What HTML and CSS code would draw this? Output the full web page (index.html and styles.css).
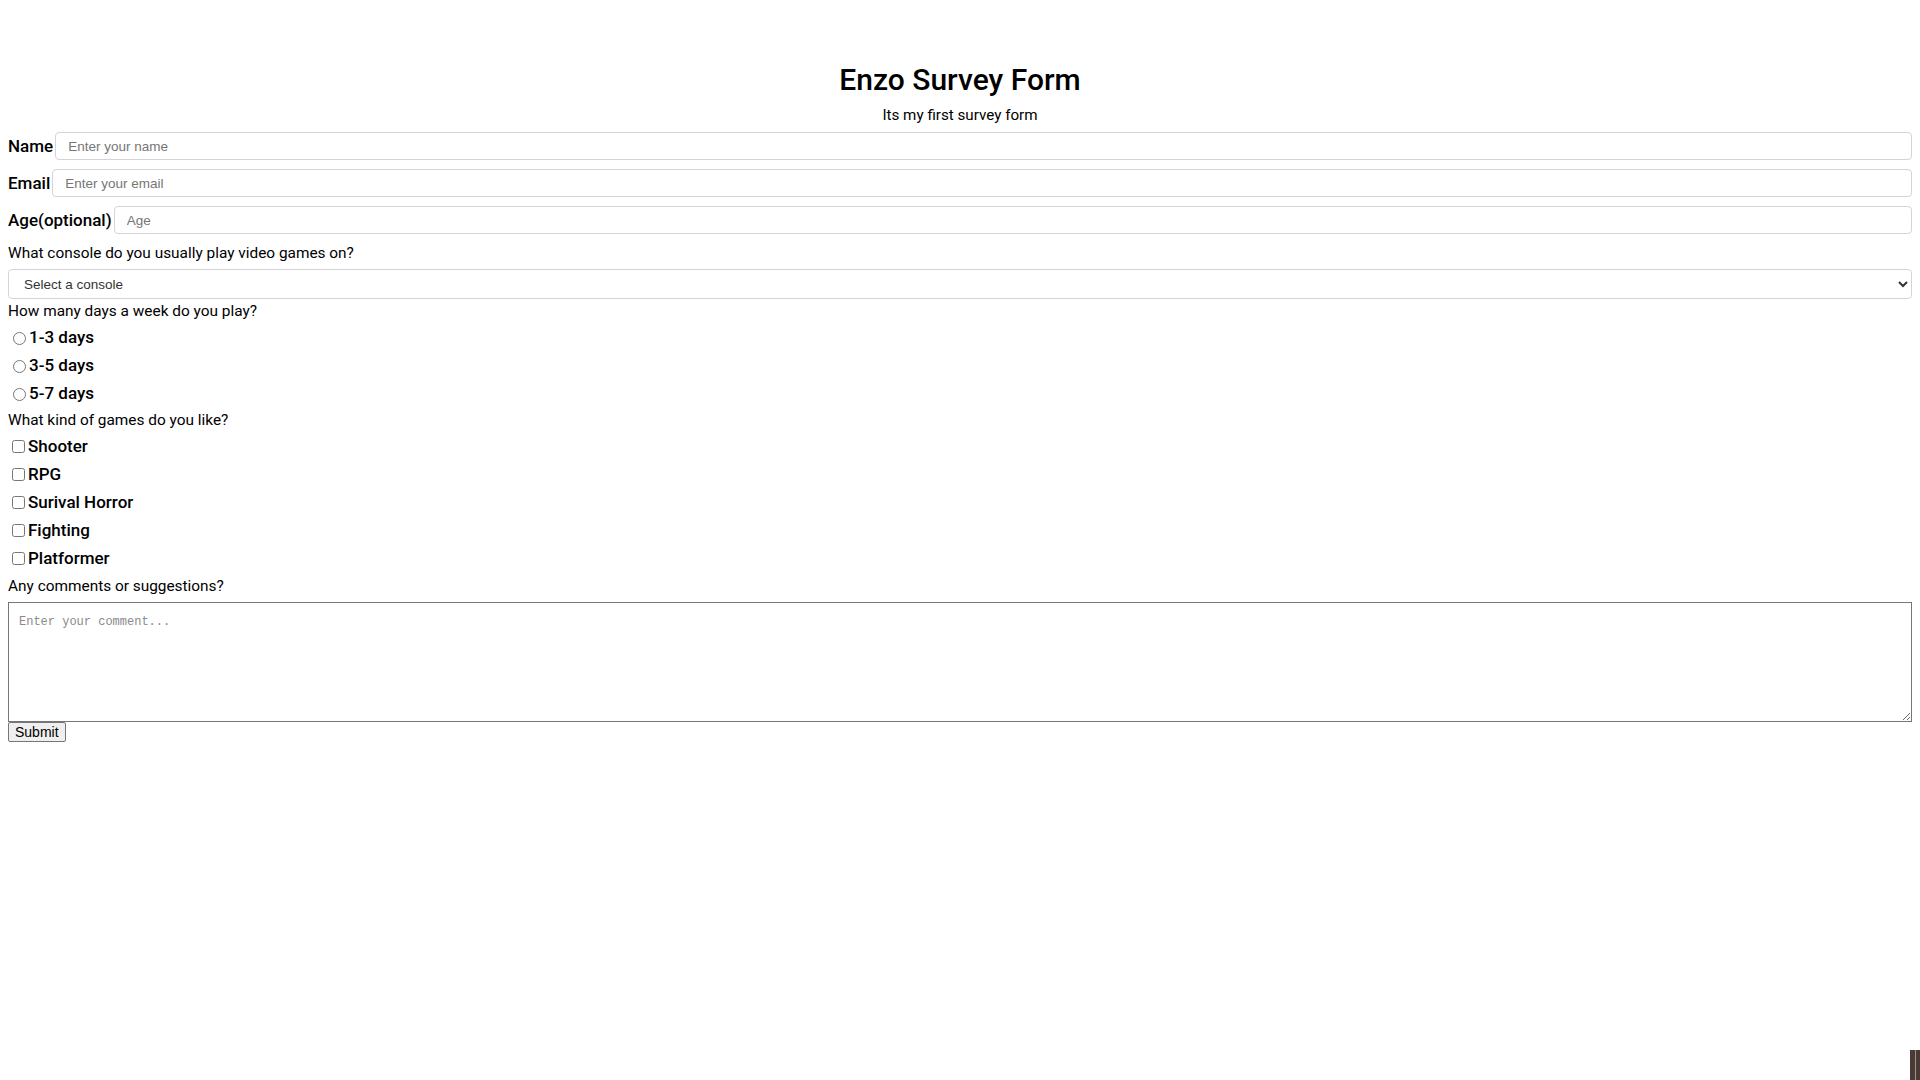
FILE: index.html
```html
<!DOCTYPE html>
<html lang="en">
<head>
<meta charset="utf-8">
<title>Enzo Survey Form</title>
<link rel="stylesheet" href="styles.css">
</head>
<body>
<header class="header">
  <h1 class="title">Enzo Survey Form</h1>
  <p class="description">Its my first survey form</p>
</header>
<form class="survey">
  <div class="field-row">
    <label class="field-label" for="name">Name</label>
    <input class="text-input" id="name" type="text" placeholder="Enter your name">
  </div>
  <div class="field-row">
    <label class="field-label" for="email">Email</label>
    <input class="text-input" id="email" type="email" placeholder="Enter your email">
  </div>
  <div class="field-row">
    <label class="field-label" for="age">Age(optional)</label>
    <input class="text-input" id="age" type="number" placeholder="Age">
  </div>
  <p class="question q-console">What console do you usually play video games on?</p>
  <select class="select">
    <option>Select a console</option>
    <option>PlayStation</option>
    <option>Xbox</option>
    <option>Nintendo Switch</option>
    <option>PC</option>
  </select>
  <p class="question q-days">How many days a week do you play?</p>
  <div class="choices">
    <label class="choice"><input type="radio" name="days">1-3 days</label>
    <label class="choice"><input type="radio" name="days">3-5 days</label>
    <label class="choice"><input type="radio" name="days">5-7 days</label>
  </div>
  <p class="question q-kind">What kind of games do you like?</p>
  <div class="choices">
    <label class="choice"><input type="checkbox">Shooter</label>
    <label class="choice"><input type="checkbox">RPG</label>
    <label class="choice"><input type="checkbox">Surival Horror</label>
    <label class="choice"><input type="checkbox">Fighting</label>
    <label class="choice"><input type="checkbox">Platformer</label>
  </div>
  <p class="question q-comments">Any comments or suggestions?</p>
  <textarea class="comment" placeholder="Enter your comment..."></textarea>
  <div class="actions"><button class="submit" type="submit">Submit</button></div>
</form>
<div class="corner-tab"></div>
</body>
</html>
```
FILE: styles.css
```css
* { box-sizing: border-box; }
html, body { margin: 0; padding: 0; background: #fff; }
body {
  padding: 0 8px;
  font-family: Roboto, "Liberation Sans", sans-serif;
  color: #000;
}
.header {
  display: flex;
  flex-direction: column;
  align-items: center;
  padding-top: 61px;
}
.title {
  margin: 0;
  font-size: 30px;
  line-height: 38px;
  font-weight: 500;
}
.description {
  margin: 6px 0 0;
  font-size: 15.2px;
  line-height: 20px;
}
.survey {
  display: flex;
  flex-direction: column;
  margin-top: 7px;
}
.field-row {
  display: flex;
  align-items: center;
  gap: 2px;
  height: 28px;
  margin-bottom: 9px;
}
.field-row:nth-child(3) { margin-bottom: 0; }
.field-label {
  font-size: 17px;
  font-weight: 500;
  white-space: nowrap;
}
.text-input {
  flex: 1;
  height: 28px;
  border: 1px solid #d4d4d8;
  border-radius: 4px;
  padding: 0 12px;
  font-family: "Liberation Sans", Arial, sans-serif;
  font-size: 13.5px;
  outline: none;
}
.text-input::placeholder { color: #767676; }
.question {
  margin: 0;
  font-size: 15.4px;
  line-height: 18px;
}
.q-console { margin-top: 10px; }
.q-days { margin-top: 3px; }
.q-kind { margin-top: 4px; }
.q-comments { margin-top: 5px; }
.select {
  margin-top: 7px;
  height: 30px;
  border: 1px solid #d4d4d8;
  border-radius: 4px;
  padding: 0 11px;
  font-family: "Liberation Sans", Arial, sans-serif;
  font-size: 13.5px;
  color: #333;
  background: #fff;
}
.choices {
  display: flex;
  flex-direction: column;
  margin-top: 3px;
}
.choice {
  display: flex;
  align-items: center;
  height: 28px;
  font-size: 17px;
  font-weight: 500;
}
.choice input { flex: none; }
.comment {
  margin-top: 7px;
  height: 120px;
  width: 100%;
  border: 1px solid #767676;
  padding: 12px 10px 10px;
  font-family: "Liberation Mono", monospace;
  font-size: 12px;
  resize: vertical;
}
.comment::placeholder { color: #8a8a8a; }
.actions { display: flex; }
.submit {
  font-family: "Liberation Sans", Arial, sans-serif;
  font-size: 14px;
  height: 20px;
  padding: 0 6px;
  border: 1px solid #767676;
  border-radius: 2px;
  background: #efefef;
  color: #000;
}
.corner-tab {
  position: fixed;
  right: 0;
  bottom: 0;
  width: 10px;
  height: 30px;
  background: linear-gradient(to right, #4a3a35 0, #4a3a35 5px, #a0928d 5px, #a0928d 6px, #4a3a35 6px);
}
```
